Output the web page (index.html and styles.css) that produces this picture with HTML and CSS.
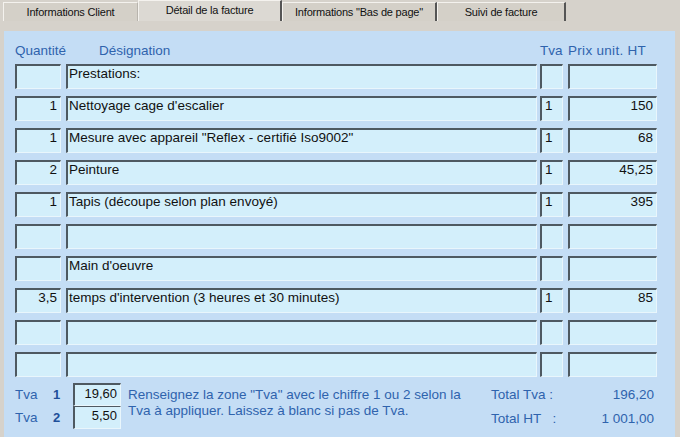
FILE: index.html
```html
<!DOCTYPE html>
<html lang="fr">
<head>
<meta charset="utf-8">
<title>Détail de la facture</title>
<link rel="stylesheet" href="styles.css">
</head>
<body>
<div class="window">
  <div class="tabs">
    <div class="tab t1">Informations Client</div>
    <div class="tab active t2">Détail de la facture</div>
    <div class="tab t3">Informations "Bas de page"</div>
    <div class="tab t4">Suivi de facture</div>
  </div>
  <div class="panel">
    <div class="line head">
      <div class="c-q lbl">Quantité</div>
      <div class="c-d lbl lbl-des">Désignation</div>
      <div class="c-t lbl">Tva</div>
      <div class="c-p lbl">Prix unit. HT</div>
    </div>
    <div class="rows">
      <div class="line"><div class="f c-q num"></div><div class="f c-d txt">Prestations:</div><div class="f c-t tva"></div><div class="f c-p num"></div></div>
      <div class="line"><div class="f c-q num">1</div><div class="f c-d txt">Nettoyage cage d'escalier</div><div class="f c-t tva">1</div><div class="f c-p num">150</div></div>
      <div class="line"><div class="f c-q num">1</div><div class="f c-d txt">Mesure avec appareil "Reflex - certifié Iso9002"</div><div class="f c-t tva">1</div><div class="f c-p num">68</div></div>
      <div class="line"><div class="f c-q num">2</div><div class="f c-d txt">Peinture</div><div class="f c-t tva">1</div><div class="f c-p num">45,25</div></div>
      <div class="line"><div class="f c-q num">1</div><div class="f c-d txt">Tapis (découpe selon plan envoyé)</div><div class="f c-t tva">1</div><div class="f c-p num">395</div></div>
      <div class="line"><div class="f c-q num"></div><div class="f c-d txt"></div><div class="f c-t tva"></div><div class="f c-p num"></div></div>
      <div class="line"><div class="f c-q num"></div><div class="f c-d txt">Main d'oeuvre</div><div class="f c-t tva"></div><div class="f c-p num"></div></div>
      <div class="line"><div class="f c-q num">3,5</div><div class="f c-d txt">temps d'intervention (3 heures et 30 minutes)</div><div class="f c-t tva">1</div><div class="f c-p num">85</div></div>
      <div class="line"><div class="f c-q num"></div><div class="f c-d txt"></div><div class="f c-t tva"></div><div class="f c-p num"></div></div>
      <div class="line"><div class="f c-q num"></div><div class="f c-d txt"></div><div class="f c-t tva"></div><div class="f c-p num"></div></div>
    </div>
    <div class="footer">
      <div class="rates">
        <div class="rate"><span class="rl">Tva</span><span class="rn">1</span><div class="f rbox">19,60</div></div>
        <div class="rate"><span class="rl">Tva</span><span class="rn">2</span><div class="f rbox second">5,50</div></div>
      </div>
      <div class="hint">Renseignez la zone "Tva" avec le chiffre 1 ou 2 selon la<br>Tva à appliquer. Laissez à blanc si pas de Tva.</div>
      <div class="totals">
        <div class="tot"><span class="tl">Total Tva :</span><span class="tv">196,20</span></div>
        <div class="tot"><span class="tl">Total HT&nbsp;&nbsp;&nbsp;:</span><span class="tv">1 001,00</span></div>
      </div>
    </div>
  </div>
</div>
</body>
</html>
```

FILE: styles.css
```css
html, body {
  margin: 0;
  padding: 0;
  background: #d6d2cb;
  font-family: "Liberation Sans", Arial, sans-serif;
}
.window {
  width: 680px;
  height: 437px;
  overflow: hidden;
}
.tabs {
  display: flex;
  height: 31px;
  align-items: flex-start;
  padding-left: 3px;
  box-sizing: border-box;
}
.tab {
  box-sizing: border-box;
  height: 19px;
  margin-top: 2px;
  font-size: 11px;
  letter-spacing: -0.2px;
  color: #111;
  display: flex;
  align-items: center;
  justify-content: center;
  background: #d4d0c8;
  border-top: 1px solid #f4f2ee;
  border-left: 1px solid #f4f2ee;
  border-right: 2px solid #555;
}
.t1 { width: 135px; border-right: 1px solid #b8b4ad; }
.t2 { width: 144px; }
.t3 { width: 155px; }
.t4 { width: 129px; }
.tab.active {
  margin-top: 0;
  height: 21px;
  background: #dcd9d3;
  padding-bottom: 2px;
}
.panel {
  margin-left: 4px;
  width: 671px;
  height: 406px;
  background: #c4ddf5;
  padding: 10px 0 0 11px;
  box-sizing: border-box;
}
.line {
  display: flex;
}
.c-q { width: 46px; }
.c-d { width: 471px; margin-left: 5px; }
.c-t { width: 23px; margin-left: 3px; }
.c-p { width: 89px; margin-left: 5px; }
.head {
  height: 18px;
  margin-bottom: 5px;
  align-items: center;
}
.lbl {
  font-size: 13.5px;
  color: #2f63ad;
  white-space: nowrap;
}
.lbl-des { padding-left: 33px; box-sizing: border-box; }
.head .c-p { letter-spacing: 0.3px; }
.rows {
  display: flex;
  flex-direction: column;
  gap: 7px;
}
.f {
  box-sizing: border-box;
  height: 25px;
  background: #d3effb;
  border-top: 2px solid #4e5961;
  border-left: 2px solid #4e5961;
  border-right: 1px solid #e9f6fc;
  border-bottom: 1px solid #e9f6fc;
  font-size: 13.5px;
  line-height: 15px;
  color: #111;
  display: flex;
  align-items: flex-start;
  white-space: nowrap;
  overflow: hidden;
}
.num { justify-content: flex-end; padding-right: 3px; }
.txt { padding-left: 1px; }
.tva { padding-left: 3px; }
.footer {
  display: flex;
  margin-top: 6px;
}
.rates {
  display: flex;
  flex-direction: column;
  width: 113px;
}
.rate {
  display: flex;
  align-items: center;
  height: 23px;
  font-size: 13.5px;
  color: #2f63ad;
}
.rl { width: 38px; }
.rn { width: 20px; color: #1f4f99; font-weight: bold; font-size: 13px; }
.rbox {
  width: 48px;
  height: 23px;
  justify-content: flex-end;
  padding-right: 3px;
  padding-top: 1px;
  font-size: 13px;
}
.rbox.second { border-top: 1px solid #4e5961; }
.hint {
  font-size: 13.5px;
  color: #2f63ad;
  line-height: 16px;
  padding-top: 4px;
  width: 363px;
  white-space: nowrap;
}
.totals {
  display: flex;
  flex-direction: column;
  width: 163px;
}
.tot {
  display: flex;
  justify-content: space-between;
  height: 23px;
  align-items: center;
  font-size: 13.5px;
  color: #2f63ad;
}
.tot + .tot { margin-top: 1px; }
```
